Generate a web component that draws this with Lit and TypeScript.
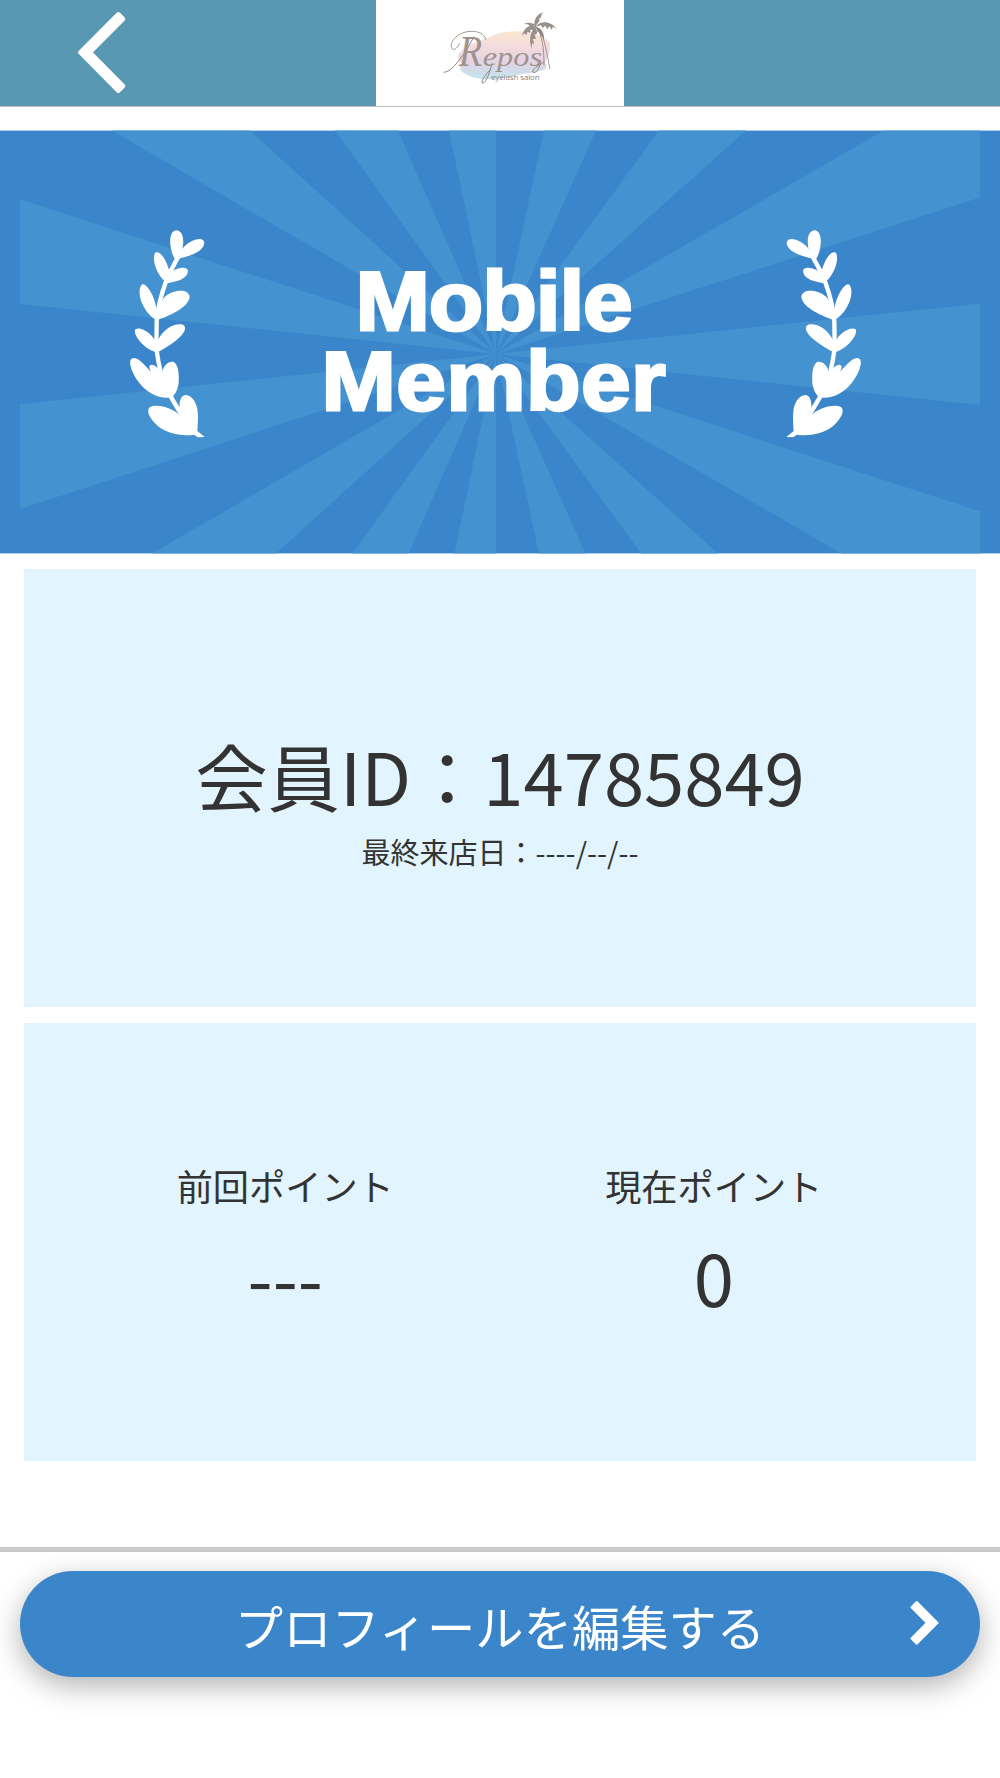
import { LitElement, html, css, svg } from "lit";
import { customElement, property } from "lit/decorators.js";

@customElement("salon-logo")
class SalonLogo extends LitElement {
  static styles = css`
    :host { display: block; width: 248px; height: 106px; background: #fff; }
    .art { display: block; }
    .name { font-family: "Liberation Serif", serif; font-style: italic; fill: #a0938d; }
    .sub { font-family: "Open Sans", sans-serif; fill: #8d8684; }
  `;
  render() {
    return html`<svg class="art" width="248" height="106" viewBox="18 0 744 318">
      <defs>
        <linearGradient id="wash" x1="0" y1="0" x2="0" y2="1">
          <stop offset="0" stop-color="#fbe6d0" />
          <stop offset=".3" stop-color="#f5dcdc" />
          <stop offset=".6" stop-color="#e6d3e4" />
          <stop offset=".85" stop-color="#cfdde9" />
          <stop offset="1" stop-color="#c3e6ea" />
        </linearGradient>
      </defs>
      <path fill="url(#wash)" d="M268 160C290 130 340 122 368 106C400 94 440 92 470 95C500 100 525 112 538 125C545 145 535 170 524 188C535 196 530 210 510 213C480 222 455 220 430 228C395 240 340 242 305 230C275 220 262 205 275 190C262 180 262 168 268 160Z" />
      <g fill="#99908b">
        <path d="M494 80C490 58 502 42 521 36C508 46 520 52 506 56C515 62 500 68 498 80Z" />
        <path d="M497 80C512 60 544 64 559 86L548 80L546 90L538 79L532 88L526 77L518 84L513 76Z" />
        <path d="M498 78C478 72 462 84 456 108L464 100L470 106L472 95L481 99L482 88L490 92Z" />
        <path d="M498 80C482 92 475 116 485 146L486 130L492 132L489 117L498 116L494 104L502 100Z" />
        <path d="M498 76C486 66 474 66 462 72L474 73L480 79Z" />
        <path d="M498 80C516 84 524 100 522 120L516 108L511 110L510 98L503 96Z" />
      </g>
      <path fill="none" stroke="#857a73" stroke-width="2.2" d="M500 82C518 108 522 150 522 196M506 84C524 112 530 160 540 208" />
      <g fill="none" stroke="#94857f" stroke-linecap="round">
        <path stroke-width="3" d="M222 217C246 214 262 186 286 156L312 110" />
        <path stroke-width="2.5" d="M268 130C262 148 248 154 244 142C240 116 274 93 306 94C326 94 344 102 347 118" />
        <path stroke-width="3" d="M366 190C360 214 350 246 338 250C330 248 344 226 362 208M512 182C510 206 498 222 488 216C486 208 502 200 522 186" />
      </g>
      <text class="name" y="197"><tspan x="266" font-size="134" textLength="70" lengthAdjust="spacingAndGlyphs">R</tspan><tspan x="338" font-size="82" textLength="178" lengthAdjust="spacingAndGlyphs">epos</tspan></text>
      <text class="sub" x="363" y="240" font-size="24" textLength="146" lengthAdjust="spacing">eyelash salon</text>
    </svg>`;
  }
}

@customElement("laurel-branch")
class LaurelBranch extends LitElement {
  @property({ type: Boolean, reflect: true }) mirrored = false;
  static styles = css`
    :host { display: block; width: 76px; height: 208px; }
    :host([mirrored]) { transform: scaleX(-1); }
    .branch { display: block; }
  `;
  render() {
    return html`<svg class="branch" width="76" height="208" viewBox="57 45 228 624" fill="#fff">
      <path fill="none" stroke="#fff" stroke-width="13" d="M205 125Q182 165 167 202Q143 270 140 320L139 400Q144 440 153 475L184 548L216 602" />
      <path d="M194 131C178 105 172 48 200 46C224 50 221 85 217 102C232 78 282 58 283 84C280 115 225 125 205 132Z" />
      <path d="M165 199C138 178 122 122 138 112C155 108 172 145 177 165L184 172C195 160 232 150 234 168C232 195 190 202 168 205Z" />
      <path d="M135 313C100 290 78 235 94 210C105 197 135 240 140 285L152 265L163 247C185 223 238 218 239 246C235 280 170 305 145 314Z" />
      <path d="M136 411C95 398 68 356 76 343C90 332 125 355 134 375L146 373C155 350 185 325 215 328C236 335 222 358 200 375C180 392 160 402 140 413Z" />
      <path d="M185 547C150 553 110 535 85 500C60 465 52 430 71 429C90 430 108 455 124 472C116 458 116 451 125 449C135 450 138 455 143 458L158 468C162 450 178 436 193 442C207 455 207 480 206 505C203 525 195 540 185 547Z" />
      <path d="M252 659C215 665 160 655 135 625C108 595 110 575 130 573C160 570 195 585 210 602C208 575 205 545 225 540C245 538 262 565 263 590C265 610 263 635 262 648L284 666L264 667Z" />
    </svg>`;
  }
}

const RAYS: string[] = [
  "112,130.6 250,130.6", "335,130.6 398,130.6", "449,130.6 496,130.6",
  "20,199.3 20,304", "20,404.3 20,509", "152,553.4 276,553.4",
  "352.5,553.4 408.5,553.4", "454.5,553.4 496,553.4",
  "544,130.6 596,130.6", "659,130.6 746,130.6", "884,130.6 980,130.6 980,197.5",
  "980,303.7 980,405", "980,511.3 980,553.4 841.5,553.4",
  "718,553.4 641,553.4", "585.5,553.4 539,553.4",
];

@customElement("member-banner")
class MemberBanner extends LitElement {
  static styles = css`
    :host { display: flex; position: relative; height: 424px; box-sizing: border-box; padding: 100px 138px 0 129px; justify-content: space-between; align-items: flex-start; }
    .rays { position: absolute; left: 0; top: 0; }
    .branch { position: relative; }
    .title { position: relative; margin: 32px 0 0; font: bold 83px/80px "Liberation Sans", Arial, sans-serif; color: #fff; text-align: center; -webkit-text-stroke: 2.8px #fff; transform: translateX(-1.5px) scaleX(1.075); }
    .line { display: block; white-space: nowrap; }
    .second { letter-spacing: .4px; margin-right: -.4px; }
    .first { letter-spacing: -1px; }
  `;
  render() {
    return html`
      <svg class="rays" width="1000" height="424" viewBox="0 130 1000 424">
        <rect y="130.6" width="1000" height="422.8" fill="#3b86ca" />
        ${RAYS.map((p) => svg`<polygon points="496,354 ${p}" fill="#4592d0" />`)}
      </svg>
      <laurel-branch class="branch"></laurel-branch>
      <h1 class="title"><span class="line first">Mobile</span><span class="line second">Member</span></h1>
      <laurel-branch class="branch" mirrored></laurel-branch>
    `;
  }
}

@customElement("point-column")
class PointColumn extends LitElement {
  @property() label = "";
  @property() value = "";
  static styles = css`
    :host { display: block; flex: 1; text-align: center; }
    .label { font-size: 36.2px; line-height: 52px; }
    .value { font-size: 72.4px; line-height: 104px; margin-top: 13px; }
  `;
  render() {
    return html`<div class="label">${this.label}</div><div class="value">${this.value}</div>`;
  }
}

@customElement("app-root")
class AppRoot extends LitElement {
  static styles = css`
    :host { display: block; min-height: 1778px; background: #fff; color: #333; font-family: "Noto Sans CJK JP", sans-serif; }
    .header { display: grid; grid-template-columns: 376px 248px 1fr; height: 106px; background: #5898b2; border-bottom: 1px solid #bdbfc1; }
    .back { display: flex; align-items: flex-start; border: 0; padding: 10px 0 0 76px; background: none; }
    .icon { display: block; }
    .banner { margin-top: 23px; }
    .card { box-sizing: border-box; height: 438px; margin: 0 24px; background: #e2f4fd; }
    .identity { margin-top: 15px; padding-top: 154px; text-align: center; }
    .id { font-size: 72.4px; line-height: 104px; }
    .visit { font-size: 29px; line-height: 42px; margin-top: 3px; }
    .points { display: flex; margin-top: 16px; padding: 136px 48px 0 47px; }
    .footer { margin-top: 86px; border-top: 5px solid #c9c9c9; padding: 19px 20px 0; }
    .edit { display: grid; grid-template-columns: 70px 1fr 70px; align-items: center; width: 960px; height: 106px; padding: 0; border: 0; border-radius: 53px; background: #3b86ca; color: #fff; font: 48.3px/70px "Noto Sans CJK JP", sans-serif; box-shadow: 0 9px 29px rgba(0, 0, 0, .3); }
    .caption { grid-column: 2; padding-top: 2px; }
    .next { margin: 0 0 2px -1px; }
  `;
  render() {
    return html`
      <header class="header">
        <button class="back" aria-label="戻る">
          <svg class="icon" width="52" height="85" viewBox="76 10 52 85">
            <path d="M80 52.3L118.3 14L123.3 19L90.2 52.3L123.3 86L118.3 91Z" fill="#fff" stroke="#fff" stroke-width="4" stroke-linejoin="round" />
          </svg>
        </button>
        <salon-logo></salon-logo>
      </header>
      <member-banner class="banner"></member-banner>
      <section class="card identity">
        <div class="id">会員ID：14785849</div>
        <div class="visit">最終来店日：----/--/--</div>
      </section>
      <section class="card points">
        <point-column label="前回ポイント" value="---"></point-column>
        <point-column label="現在ポイント" value="0"></point-column>
      </section>
      <footer class="footer">
        <button class="edit">
          <span class="caption">プロフィールを編集する</span>
          <svg class="icon next" width="30" height="46" viewBox="909 1600 30 46">
            <path d="M916.7 1602L911.5 1607.3L926.8 1622.9L911.5 1638.5L916.7 1643.7L937.6 1622.9Z" fill="#fff" stroke="#fff" stroke-width="2" stroke-linejoin="round" />
          </svg>
        </button>
      </footer>
    `;
  }
}
